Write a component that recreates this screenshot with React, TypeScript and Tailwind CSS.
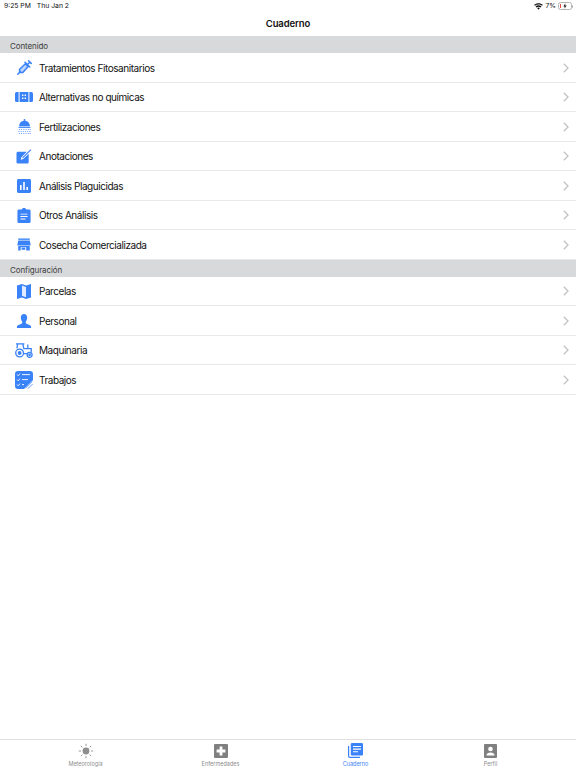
import { ReactNode } from "react";

const BLUE = "#3a82f7";

function Syringe() {
  return (
    <svg viewBox="0 0 15 15" className="h-[15px] w-[15px]" fill="none" stroke={BLUE} strokeWidth="1.5" strokeLinecap="round">
      <path d="M0.8 14.2 3.2 11.8" />
      <path d="M2.6 9.2 8.4 3.8 11.2 6.6 5.8 12.4 2.6 12.4Z" fill={BLUE} fillOpacity="0.35" />
      <path d="M8 2.2 12.8 7M10.2 4.8 13 2M11.6 0.8 14.2 3.4" />
    </svg>
  );
}

function Bandage() {
  return (
    <svg viewBox="0 0 18 10" className="h-[10px] w-[18px]" fill={BLUE}>
      <path d="M1.5 0H3.6V10H1.5A1.5 1.5 0 0 1 0 8.5V1.5A1.5 1.5 0 0 1 1.5 0Z" />
      <path d="M4.6 0H13.4V10H4.6Z" />
      <path d="M14.4 0H16.5A1.5 1.5 0 0 1 18 1.5V8.5A1.5 1.5 0 0 1 16.5 10H14.4Z" />
      <path d="M7 2.6H8.4V4H7ZM9.6 2.6H11V4H9.6ZM7 5.6H8.4V7H7ZM9.6 5.6H11V7H9.6Z" fill="#fff" />
    </svg>
  );
}

function Shower() {
  return (
    <svg viewBox="0 0 14 16" className="h-[15px] w-[13px]" fill={BLUE}>
      <path d="M6.2 0H7.8V2H6.2Z" />
      <path d="M1.2 7.6C1.4 4.2 3.6 1.8 7 1.8S12.6 4.2 12.8 7.6Z" />
      <path d="M0.6 8.3H13.4V9.5H0.6Z" />
      <path
        d="M1 10.8h1v1H1ZM3.4 10.8h1v1h-1ZM5.8 10.8h1v1h-1ZM8.2 10.8h1v1h-1ZM10.6 10.8h1v1h-1ZM12.6 10.8h1v1h-1ZM0.4 12.9h1v1h-1ZM2.8 12.9h1v1h-1ZM5.2 12.9h1v1h-1ZM7.6 12.9h1v1h-1ZM10 12.9h1v1h-1ZM12.4 12.9h1v1h-1ZM1 15h1v1H1ZM3.4 15h1v1h-1ZM5.8 15h1v1h-1ZM8.2 15h1v1h-1ZM10.6 15h1v1h-1ZM12.6 15h1v1h-1Z"
        opacity="0.8"
      />
    </svg>
  );
}

function NoteEdit() {
  return (
    <svg viewBox="0 0 16 16" className="h-[15px] w-4">
      <path d="M1.5 3H11L5.2 8.8 4.4 11.5 7.2 10.7 13 5V14A1.5 1.5 0 0 1 11.5 15.5H1.5A1.5 1.5 0 0 1 0 14V4.5A1.5 1.5 0 0 1 1.5 3Z" fill={BLUE} />
      <path d="M6.5 9.5 15.4 0.6" stroke={BLUE} strokeWidth="1.2" />
    </svg>
  );
}

function BarsIcon() {
  return (
    <svg viewBox="0 0 14 14" className="h-[14px] w-[14px]">
      <rect width="14" height="14" rx="1.4" fill={BLUE} />
      <path d="M3 6H4.6V11H3ZM6.2 3H7.8V11H6.2ZM9.4 8H11V11H9.4Z" fill="#fff" />
    </svg>
  );
}

function Clipboard() {
  return (
    <svg viewBox="0 0 14 16" className="h-[15px] w-[14px]">
      <path d="M1.4 1.6H4.6C4.9 0.6 5.8 0 7 0S9.1 0.6 9.4 1.6H12.6A1.4 1.4 0 0 1 14 3V14.6A1.4 1.4 0 0 1 12.6 16H1.4A1.4 1.4 0 0 1 0 14.6V3A1.4 1.4 0 0 1 1.4 1.6Z" fill={BLUE} />
      <path d="M3.2 6H10.8V7H3.2ZM3.2 8.6H10.8V9.6H3.2ZM3.2 11.2H8.6V12.2H3.2Z" fill="#fff" />
    </svg>
  );
}

function Store() {
  return (
    <svg viewBox="0 0 14 14" className="h-[13px] w-[14px]" fill={BLUE}>
      <path d="M0.8 0.5H13.2V2H0.8Z" />
      <path d="M0.8 2.8H13.2L14 6.6V8H0V6.6Z" />
      <path d="M0.8 8.6H13.2V13.5H9.4V10H3.4V13.5H0.8ZM4.4 10.4H8.4V12.6H4.4Z" fillRule="evenodd" />
    </svg>
  );
}

function MapIcon() {
  return (
    <svg viewBox="0 0 14 15" className="h-[15px] w-[14px]" fill={BLUE}>
      <path d="M0 1.6 5 0 9 1.6 14 0V13.4L9 15 5 13.4 0 15Z" />
      <path d="M5 1.6 9 3.1V13.2L5 11.7Z" fill="#fff" fillOpacity="0.85" />
    </svg>
  );
}

function Person() {
  return (
    <svg viewBox="0 0 14 14" className="h-[14px] w-[14px]" fill={BLUE}>
      <path d="M7 0C9 0 10.2 1.5 10.2 3.6C10.2 5.4 9.3 7 8.8 7.8C8.5 8.6 8.8 9.4 10 10C11.8 10.8 13.6 11.2 14 12.2V14H0V12.2C0.4 11.2 2.2 10.8 4 10C5.2 9.4 5.5 8.6 5.2 7.8C4.7 7 3.8 5.4 3.8 3.6C3.8 1.5 5 0 7 0Z" />
    </svg>
  );
}

function Tractor() {
  return (
    <svg viewBox="0 0 18 15" className="h-[15px] w-[18px]" fill="none" stroke={BLUE} strokeWidth="1.3">
      <circle cx="4.6" cy="10" r="3.9" />
      <circle cx="4.6" cy="10" r="1.3" fill={BLUE} />
      <circle cx="14.6" cy="11.8" r="2.5" />
      <circle cx="14.6" cy="11.8" r="0.7" fill={BLUE} />
      <path d="M1 0.8H9.4M2.6 0.8 2 5.4M7.8 0.8 8.8 5.6H16.2V9.2M8.8 10.6H12M12.8 5.6V1.6" />
    </svg>
  );
}

function Checklist() {
  return (
    <svg viewBox="0 0 18 18" className="h-[18px] w-[18px]">
      <path d="M3 0H15A3 3 0 0 1 18 3V9L9 18H3A3 3 0 0 1 0 15V3A3 3 0 0 1 3 0Z" fill={BLUE} />
      <path d="M2 3.6 3.2 4.8 5 2.6M2 8.6 3.2 9.8 5 7.6M2 13.6 3.2 14.8 5 12.6" stroke="#fff" strokeWidth="0.9" fill="none" />
      <path d="M7 3.6H15M7 8.6H13M7 13.6H9" stroke="#fff" strokeWidth="0.9" />
      <path d="M10.5 17.2 17.2 10.5M13 17.6 17.8 12.8" stroke={BLUE} strokeWidth="1" opacity="0.75" />
    </svg>
  );
}

function Sun() {
  return (
    <svg viewBox="0 0 16 16" className="h-4 w-4" fill="#8e8e8e">
      <circle cx="8" cy="8" r="3.4" />
      <path
        d="M8 0.8V3M8 13V15.2M0.8 8H3M13 8H15.2M2.9 2.9 4.4 4.4M11.6 11.6 13.1 13.1M13.1 2.9 11.6 4.4M4.4 11.6 2.9 13.1"
        stroke="#8e8e8e"
        strokeWidth="0.9"
      />
    </svg>
  );
}

function MedCross() {
  return (
    <svg viewBox="0 0 14 14" className="h-[14px] w-[14px]">
      <rect width="14" height="14" rx="1" fill="#808080" />
      <path d="M5.6 2.6H8.4V5.6H11.4V8.4H8.4V11.4H5.6V8.4H2.6V5.6H5.6Z" fill="#fff" />
    </svg>
  );
}

function Book() {
  return (
    <svg viewBox="0 0 15 15" className="h-[15px] w-[15px]">
      <path d="M0.6 3V13A1.4 1.4 0 0 0 2 14.4H12" stroke={BLUE} strokeWidth="1.2" fill="none" />
      <rect x="2.8" y="0" width="12.2" height="12.4" rx="1.2" fill={BLUE} />
      <path d="M5 3H13V4.1H5ZM5 5.6H13V6.7H5ZM5 8.2H10V9.3H5Z" fill="#fff" />
    </svg>
  );
}

function Profile() {
  return (
    <svg viewBox="0 0 13 14" className="h-[14px] w-[13px]">
      <rect width="13" height="14" rx="1" fill="#808080" />
      <circle cx="6.5" cy="5" r="2.3" fill="#fff" />
      <path d="M2.4 11.4C2.6 9.4 4.4 8.6 6.5 8.6S10.4 9.4 10.6 11.4Z" fill="#fff" />
    </svg>
  );
}

function Wifi() {
  return (
    <svg viewBox="0 0 10 8" className="h-[7px] w-[9px]" fill="#111">
      <path d="M5 7.6 3.4 5.8C4.3 5 5.7 5 6.6 5.8Z" />
      <path d="M2.7 5.1 1.6 3.9C3.5 2.2 6.5 2.2 8.4 3.9L7.3 5.1C6 4 4 4 2.7 5.1Z" />
      <path d="M0.9 3.2 0 2.1C2.8 -0.4 7.2 -0.4 10 2.1L9.1 3.2C6.8 1.2 3.2 1.2 0.9 3.2Z" />
    </svg>
  );
}

function Battery() {
  return (
    <div className="flex items-center">
      <div className="relative flex h-[8px] w-[14px] items-center rounded-[2.5px] border border-[#b4b4b4] p-[1px]">
        <div className="h-full w-[1px] bg-[#e5483d]" />
        <svg viewBox="0 0 6 8" className="absolute left-[4px] top-[0px] h-[6px] w-[4px]" fill="#111">
          <path d="M3.6 0 0.6 4.6H2.6L2.2 8 5.4 3.2H3.2Z" />
        </svg>
      </div>
      <div className="h-[3px] w-[1px] rounded-r-sm bg-[#b4b4b4]" />
    </div>
  );
}

function Chevron() {
  return (
    <svg viewBox="0 0 6 10" className="h-[10px] w-[6px]" fill="none" stroke="#c2c2c5" strokeWidth="1.3">
      <path d="M0.8 0.8 5 5 0.8 9.2" />
    </svg>
  );
}

function SectionHeader({ label }: { label: string }) {
  return (
    <div className="flex h-[17px] items-center bg-[#d8d9da] pl-[10px] pt-[3px] text-[8px] tracking-[-0.1px] text-[#3c3c3e]">
      {label}
    </div>
  );
}

function Row({ icon, label }: { icon: ReactNode; label: string }) {
  return (
    <div className="flex h-[29.5px] items-center border-b border-[#e8e8e8] bg-white pr-[7px] pt-[1px]">
      <div className="flex w-[39px] shrink-0 items-center justify-center pl-[9px]">
        <div className="flex w-[18px] shrink-0 justify-center">{icon}</div>
      </div>
      <span className="flex-1 pt-[1px] text-[10px] tracking-[-0.45px] text-[#111]">{label}</span>
      <Chevron />
    </div>
  );
}

function Tab({ icon, label, active }: { icon: ReactNode; label: string; active?: boolean }) {
  return (
    <div className="flex flex-1 flex-col items-center">
      <div className="flex h-[15px] items-center">{icon}</div>
      <span className={`mt-[3px] text-[5.5px] leading-[7px] ${active ? "text-[#3a82f7]" : "text-[#8e8e8e]"}`}>
        {label}
      </span>
    </div>
  );
}

const contenido = [
  { label: "Tratamientos Fitosanitarios", icon: <Syringe /> },
  { label: "Alternativas no químicas", icon: <Bandage /> },
  { label: "Fertilizaciones", icon: <Shower /> },
  { label: "Anotaciones", icon: <NoteEdit /> },
  { label: "Análisis Plaguicidas", icon: <BarsIcon /> },
  { label: "Otros Análisis", icon: <Clipboard /> },
  { label: "Cosecha Comercializada", icon: <Store /> },
];

const configuracion = [
  { label: "Parcelas", icon: <MapIcon /> },
  { label: "Personal", icon: <Person /> },
  { label: "Maquinaria", icon: <Tractor /> },
  { label: "Trabajos", icon: <Checklist /> },
];

export default function App() {
  return (
    <div className="flex h-[768px] w-[576px] flex-col bg-white font-['Inter',sans-serif] text-[#111]">
      <div className="flex h-[10px] items-center justify-between pl-[4px] pr-[3px] pt-[2px] text-[6.8px] leading-none">
        <div className="flex gap-[6px]">
          <span>9:25 PM</span>
          <span>Thu Jan 2</span>
        </div>
        <div className="flex items-center gap-[2px]">
          <Wifi />
          <span>7%</span>
          <Battery />
        </div>
      </div>
      <div className="flex h-[26px] items-center justify-center pt-[3px] text-[9.5px] font-semibold tracking-[-0.1px]">
        Cuaderno
      </div>

      <SectionHeader label="Contenido" />
      {contenido.map((item) => (
        <Row key={item.label} label={item.label} icon={item.icon} />
      ))}
      <SectionHeader label="Configuración" />
      {configuracion.map((item) => (
        <Row key={item.label} label={item.label} icon={item.icon} />
      ))}

      <div className="flex-1" />

      <div className="flex h-[29px] border-t border-[#dfdfdf] pt-[3px]">
        <div className="flex flex-1 px-[18px]">
          <Tab icon={<Sun />} label="Meteorología" />
          <Tab icon={<MedCross />} label="Enfermedades" />
          <Tab icon={<Book />} label="Cuaderno" active />
          <Tab icon={<Profile />} label="Perfil" />
        </div>
      </div>
    </div>
  );
}
